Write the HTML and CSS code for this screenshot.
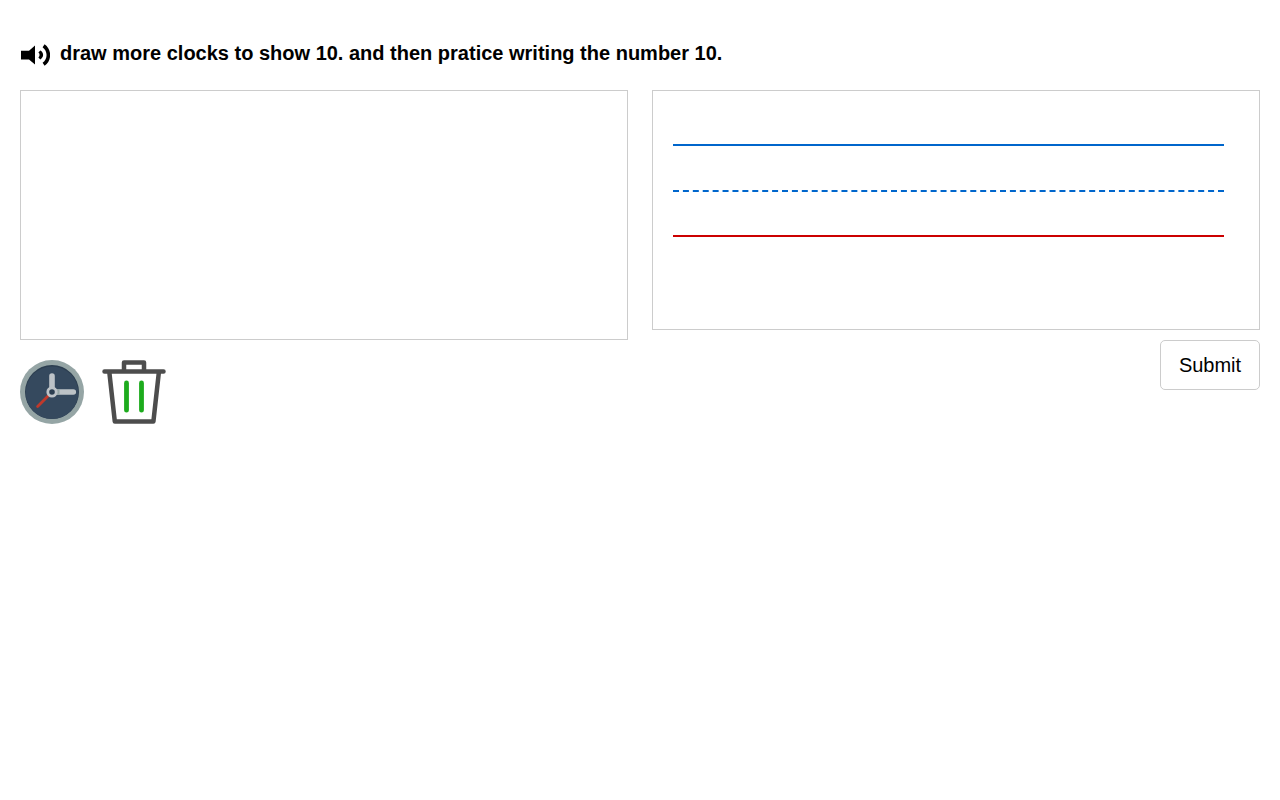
FILE: index.html
```html
<!DOCTYPE html>
<html lang="en">
<head>
<meta charset="utf-8">
<title>Clocks</title>
<link rel="stylesheet" href="styles.css">
</head>
<body>
<header class="question">
  <svg class="speaker" viewBox="0 0 30 24" width="30" height="24">
    <path d="M1 7.800h8L15 2.400v19.200l-6-5.200H1z"/>
    <path d="M18.400 9.600L20.300 7.600c3.800 2 3.800 6.800 0 8.800L18.400 14.400c1.600-1.300 1.600-3.500 0-4.800z"/>
    <path d="M22.600 4.200L24.600 1.200c7.400 5 7.400 16.600 0 21.600L22.600 19.800c5.300-4 5.300-11.600 0-15.600z"/>
  </svg>
  <h1 class="prompt">draw more clocks to show 10. and then pratice writing the number 10.</h1>
</header>
<main class="activity">
  <section class="column">
    <div class="drawing"></div>
    <div class="tools">
      <svg width="64" height="64" viewBox="0 0 64 64">
        <circle cx="32" cy="32" r="32" fill="#95a5a5"/>
        <circle cx="32" cy="32" r="27" fill="#2c3e50"/>
        <circle cx="32" cy="32.7" r="26.300" fill="#35495e"/>
        <path d="M32 32L17.600 46.400" stroke="#c0392b" stroke-width="2.800" stroke-linecap="round"/>
        <path d="M32 16v16h21.300" fill="none" stroke="#bdc3c7" stroke-width="5.600" stroke-linecap="round"/>
        <path d="M36 32h3.500" stroke="#95a5a5" stroke-width="5.600"/>
        <circle cx="32" cy="32" r="4.200" fill="#2c3e50" stroke="#bdc3c7" stroke-width="2.800"/>
      </svg>
      <svg width="64" height="64" viewBox="0 0 64 64">
        <g fill="none" stroke="#4d4d4d" stroke-width="4.500" stroke-linecap="round" stroke-linejoin="round">
          <path d="M2.500 11.500h59M22 11V2.500h20V11M7.300 12l5.500 49.500h38.600L56.900 12"/>
          <path d="M24.500 23v27.200M39.500 23v27.200" stroke="#1dab1d" stroke-width="4.800"/>
        </g>
      </svg>
    </div>
  </section>
  <section class="column">
    <div class="writing">
      <div class="rule top"></div>
      <div class="rule middle"></div>
      <div class="rule base"></div>
    </div>
    <button class="submit">Submit</button>
  </section>
</main>
</body>
</html>
```
FILE: styles.css
```css
* { box-sizing: border-box; }
body {
  margin: 0;
  padding: 40px 20px 0;
  background: #fff;
  color: #000;
  font-family: "Liberation Sans", Arial, sans-serif;
  font-size: 20px;
}
.question { display: flex; gap: 10px; height: 50px; }
.speaker { margin-top: 3px; }
.prompt {
  margin: 0;
  font-size: 20px;
  line-height: 26px;
  font-weight: bold;
}
.activity { display: grid; grid-template-columns: 1fr 1fr; gap: 24px; }
.column { display: flex; flex-direction: column; }
.drawing { height: 250px; border: 1px solid #ccc; }
.tools { display: flex; gap: 18px; margin-top: 20px; }
.writing {
  height: 240px;
  border: 1px solid #ccc;
  padding: 53px 35px 0 20px;
}
.rule { border-top: 2px solid #06c; }
.middle { margin-top: 44px; border-top-style: dashed; }
.base { margin-top: 43px; border-top-color: #c00; }
.submit {
  align-self: flex-end;
  width: 100px;
  height: 50px;
  margin-top: 10px;
  padding: 0;
  border: 1px solid #ccc;
  border-radius: 5px;
  background: #fff;
  color: #000;
  font: 20px "Liberation Sans", Arial, sans-serif;
}
```
